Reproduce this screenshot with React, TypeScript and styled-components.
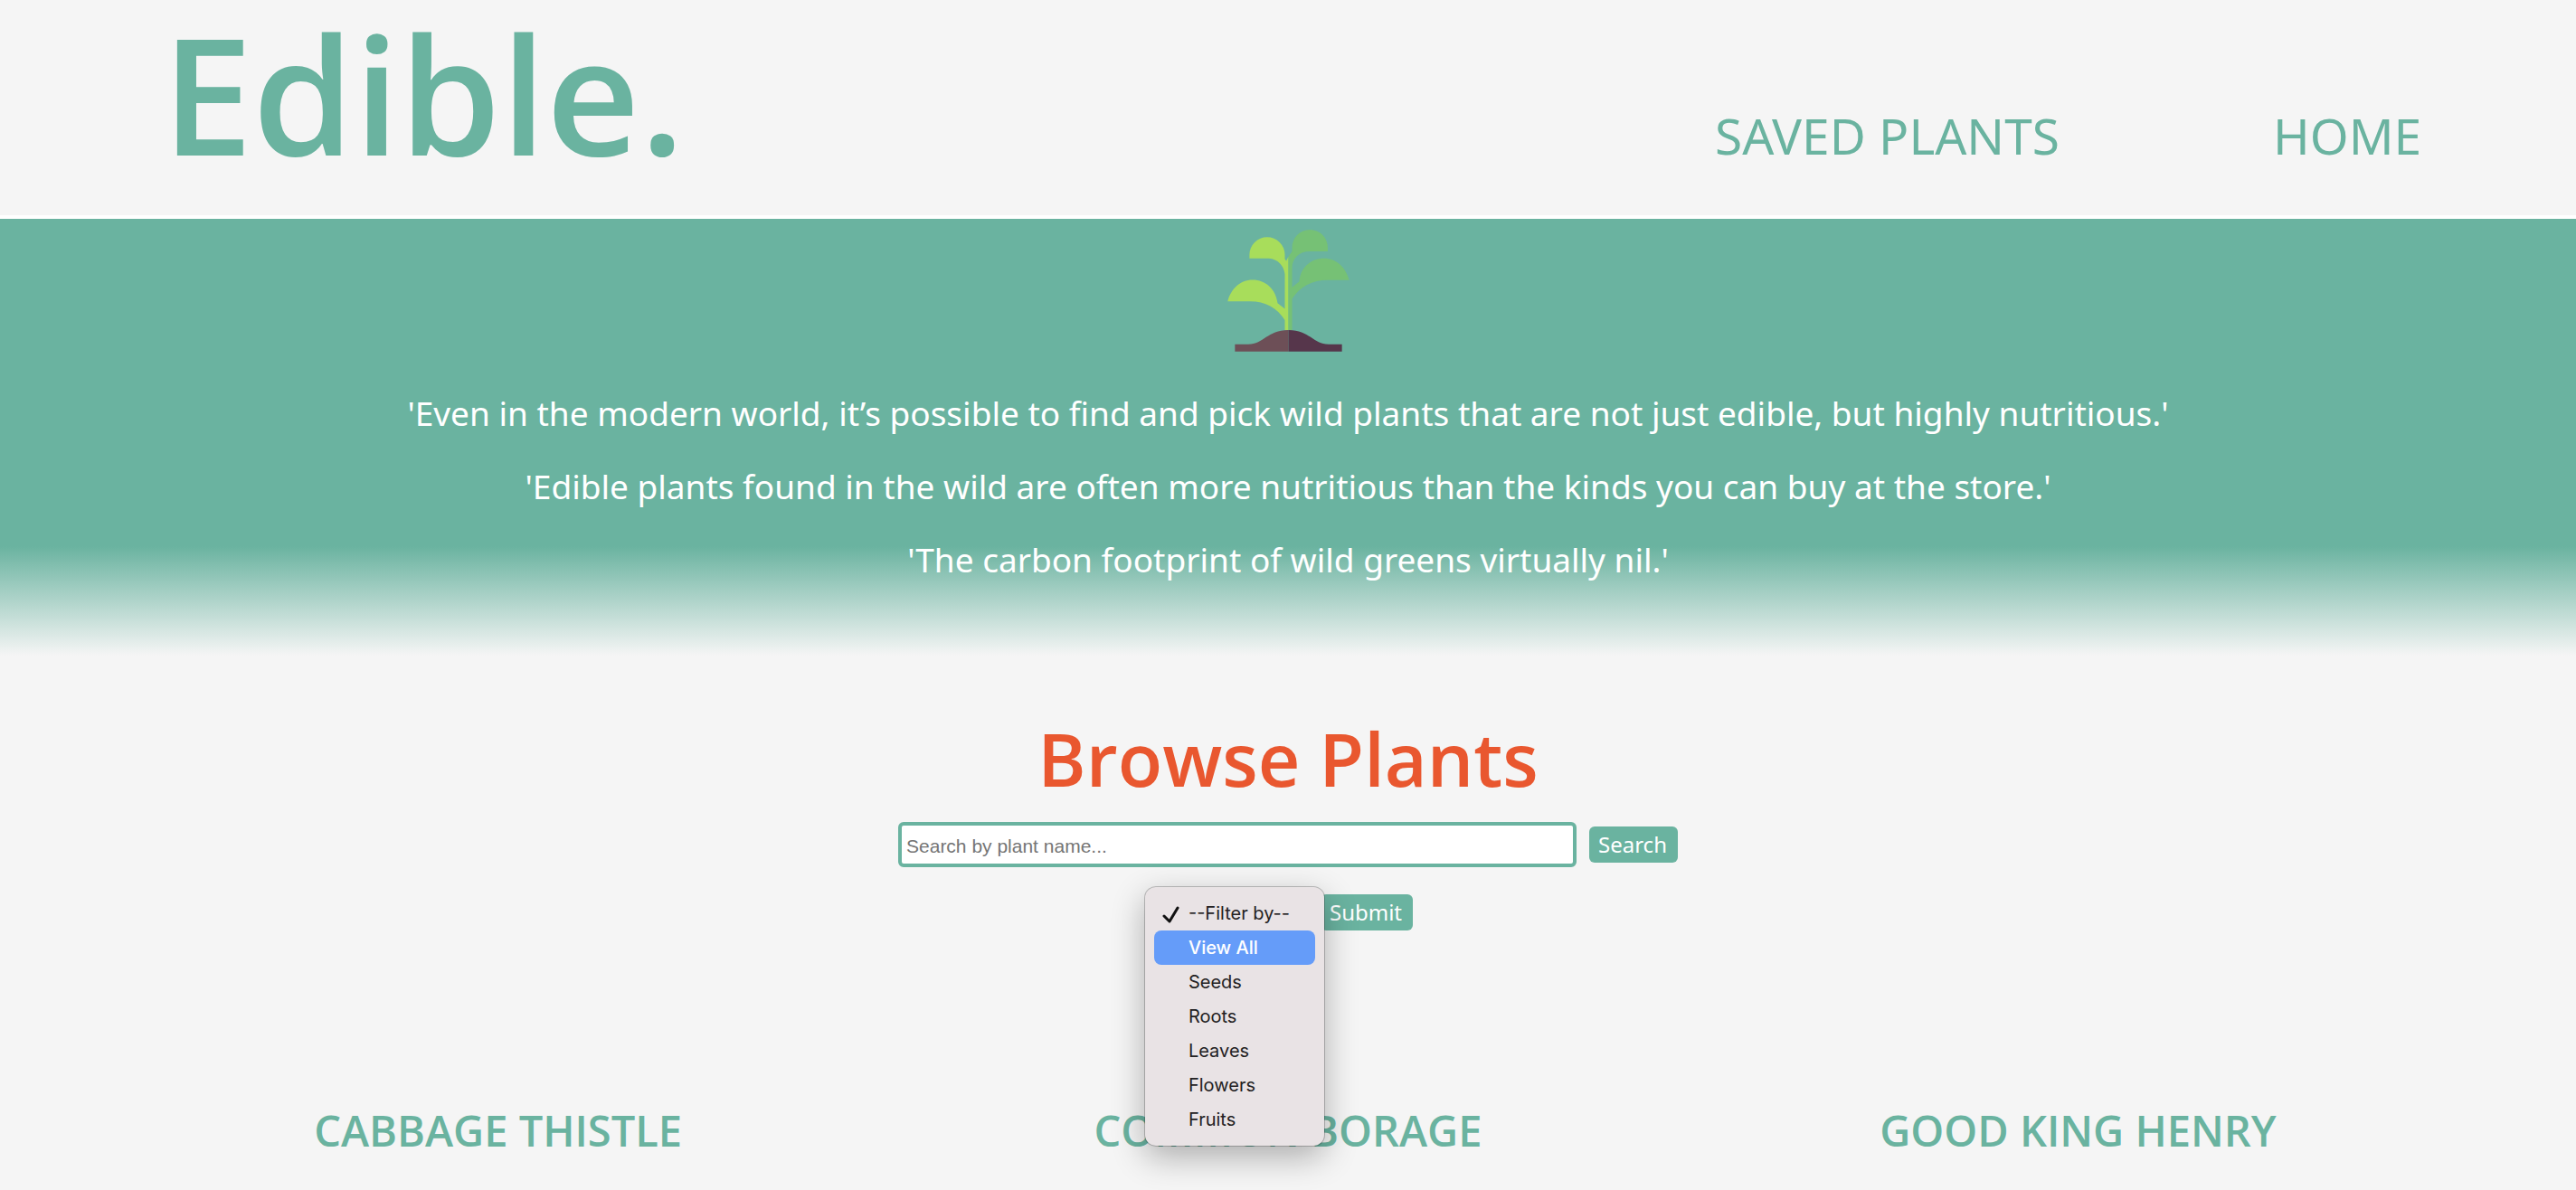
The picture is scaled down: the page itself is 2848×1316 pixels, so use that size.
import React, { useState } from "react";
import styled, { createGlobalStyle } from "styled-components";

const green = "#6ab3a0";
const page = "#f5f5f5";

const GlobalStyle = createGlobalStyle`
  *, *::before, *::after { box-sizing: border-box; }
  body {
    margin: 0;
    background: ${page};
    color: ${green};
    font-family: "Noto Sans", "Open Sans", sans-serif;
  }
`;

const Page = styled.div`
  min-height: 100vh;
`;

const Header = styled.header`
  display: flex;
  justify-content: space-between;
  align-items: flex-end;
  padding: 4px 6% 36px;
  border-bottom: 4px solid #ffffff;
`;

const Logo = styled.h1`
  margin: 0;
  padding-left: 8px;
  font-family: "Open Sans", sans-serif;
  font-size: 180px;
  line-height: 198px;
  font-weight: 600;
`;

const Nav = styled.nav`
  display: flex;
  gap: 236px;
  padding-bottom: 20px;
`;

const NavLink = styled.a`
  color: ${green};
  font-size: 55px;
  line-height: 64px;
  text-decoration: none;
  text-transform: uppercase;
`;

const Hero = styled.section`
  display: flex;
  flex-direction: column;
  align-items: center;
  padding: 12px 24px 66px;
  background: linear-gradient(${green} 75%, ${page} 100%);
`;

const Sprout = styled.svg`
  display: block;
  width: 135px;
  height: 135px;
  margin-bottom: 27px;
`;

const Quote = styled.p`
  margin: 0;
  color: #ffffff;
  font-size: 37px;
  line-height: 81px;
  text-align: center;
`;

const Browse = styled.main`
  display: flex;
  flex-direction: column;
  align-items: center;
  padding-top: 64px;
`;

const Title = styled.h2`
  margin: 0 0 20px;
  color: #e9572f;
  font-family: "Open Sans", sans-serif;
  font-size: 81px;
  line-height: 100px;
  font-weight: 600;
`;

const FormRow = styled.form`
  display: flex;
  justify-content: center;
  align-items: center;
  gap: 14px;
  width: 100%;
  margin-bottom: 30px;
`;

const SearchBox = styled.input`
  width: 750px;
  height: 50px;
  padding: 4px 5px 0;
  border: 4px solid ${green};
  border-radius: 6px;
  background: #ffffff;
  color: #222222;
  font-family: "Liberation Sans", Arial, sans-serif;
  font-size: 21px;
  outline: none;
  &::placeholder { color: #757575; opacity: 1; }
`;

const Button = styled.button`
  height: 40px;
  padding: 0 12px 0 10px;
  border: 0;
  border-radius: 6px;
  background: ${green};
  color: #ffffff;
  font-family: inherit;
  font-size: 24px;
  line-height: 40px;
`;

const FilterField = styled.div`
  position: relative;
`;

const Select = styled.select`
  display: block;
  width: 160px;
  height: 36px;
  border: 1px solid #b8b8b8;
  border-radius: 6px;
  background: #ffffff;
  font-family: Inter, sans-serif;
  font-size: 20px;
`;

const Menu = styled.ul`
  position: absolute;
  top: -10px;
  left: -20px;
  z-index: 2;
  width: 198px;
  margin: 0;
  padding: 10px;
  list-style: none;
  border-radius: 12px;
  background: #e9e3e5;
  box-shadow: 0 0 0 1px rgba(0, 0, 0, 0.22), 0 12px 36px rgba(0, 0, 0, 0.3);
`;

const Option = styled.li<{ $active: boolean }>`
  display: grid;
  grid-template-columns: 38px 1fr;
  align-items: center;
  height: 38px;
  border-radius: 8px;
  background: ${(p) => (p.$active ? "#659cf9" : "transparent")};
  color: ${(p) => (p.$active ? "#ffffff" : "#232122")};
  font-family: Inter, sans-serif;
  font-size: 20px;
  font-weight: ${(p) => (p.$active ? 500 : 400)};
  white-space: nowrap;
`;

const Tick = styled.svg`
  display: block;
  width: 20px;
  height: 20px;
  margin: 4px 0 0 9px;
`;

const Cards = styled.section`
  display: grid;
  grid-template-columns: repeat(3, 1fr);
  width: 100%;
  margin-top: 163px;
  padding: 0 4%;
`;

const CardTitle = styled.h3`
  margin: 0;
  font-family: "Open Sans", sans-serif;
  font-size: 47px;
  line-height: 56px;
  font-weight: 600;
  text-align: center;
  text-transform: uppercase;
`;

const quotes = [
  "'Even in the modern world, it’s possible to find and pick wild plants that are not just edible, but highly nutritious.'",
  "'Edible plants found in the wild are often more nutritious than the kinds you can buy at the store.'",
  "'The carbon footprint of wild greens virtually nil.'",
];

const filters = ["--Filter by--", "View All", "Seeds", "Roots", "Leaves", "Flowers", "Fruits"];

const plants = ["Cabbage Thistle", "Common Borage", "Good King Henry"];

function SproutPicture() {
  return (
    <Sprout viewBox="77 71 404 404" role="img" aria-label="Sprouting plant">
      <path
        fill="#a8dd5b"
        d="M279 403V160L272 174L267 168V154A58.500 58.500 0 0 0 150 154V166H214C244 168 264 190 267 218V333L243 314C237 269 205 237 160 237C119 237 88 268 78 308H152C202 308 242 330 267 370V403Z"
      />
      <path
        fill="#76c175"
        d="M279 403V160L291 143V130A59 59 0 0 1 409 130V143H350C314 143 291 165 291 200V262L315 242C318 197 353 166 397 166C438 166 469 196 480 238H408C358 238 317 260 291 300V403Z"
      />
      <path fill="#6d4f57" d="M102 474V450H146C198 450 208 403 279 403V474Z" />
      <path fill="#56364b" d="M279 403C350 403 360 450 412 450H456V474H279Z" />
    </Sprout>
  );
}

export default function App() {
  const [query, setQuery] = useState("");
  const [picked, setPicked] = useState(filters[0]);
  const [active, setActive] = useState(filters[1]);
  const hold = (e: React.FormEvent) => e.preventDefault();

  return (
    <Page>
      <GlobalStyle />
      <Header>
        <Logo>Edible.</Logo>
        <Nav>
          <NavLink href="#saved">Saved Plants</NavLink>
          <NavLink href="#home">Home</NavLink>
        </Nav>
      </Header>
      <Hero>
        <SproutPicture />
        {quotes.map((q) => (
          <Quote key={q}>{q}</Quote>
        ))}
      </Hero>
      <Browse>
        <Title>Browse Plants</Title>
        <FormRow onSubmit={hold}>
          <SearchBox
            type="text"
            aria-label="Search by plant name"
            placeholder="Search by plant name..."
            value={query}
            onChange={(e) => setQuery(e.target.value)}
          />
          <Button type="submit">Search</Button>
        </FormRow>
        <FormRow onSubmit={hold}>
          <FilterField>
            <Select aria-label="Filter by" value={picked} onChange={(e) => setPicked(e.target.value)}>
              {filters.map((f) => (
                <option key={f}>{f}</option>
              ))}
            </Select>
            <Menu role="listbox" aria-label="Filter options">
              {filters.map((f) => (
                <Option
                  key={f}
                  role="option"
                  aria-selected={f === picked}
                  $active={f === active}
                  onMouseEnter={() => setActive(f)}
                  onClick={() => setPicked(f)}
                >
                  {f === picked ? (
                    <Tick viewBox="0 0 20 20" aria-hidden="true">
                      <path
                        d="M2 11L8 17L17 2"
                        fill="none"
                        stroke="#111111"
                        strokeWidth="3"
                        strokeLinecap="round"
                        strokeLinejoin="round"
                      />
                    </Tick>
                  ) : (
                    <span />
                  )}
                  <span>{f}</span>
                </Option>
              ))}
            </Menu>
          </FilterField>
          <Button type="submit">Submit</Button>
        </FormRow>
        <Cards>
          {plants.map((p) => (
            <CardTitle key={p}>{p}</CardTitle>
          ))}
        </Cards>
      </Browse>
    </Page>
  );
}
